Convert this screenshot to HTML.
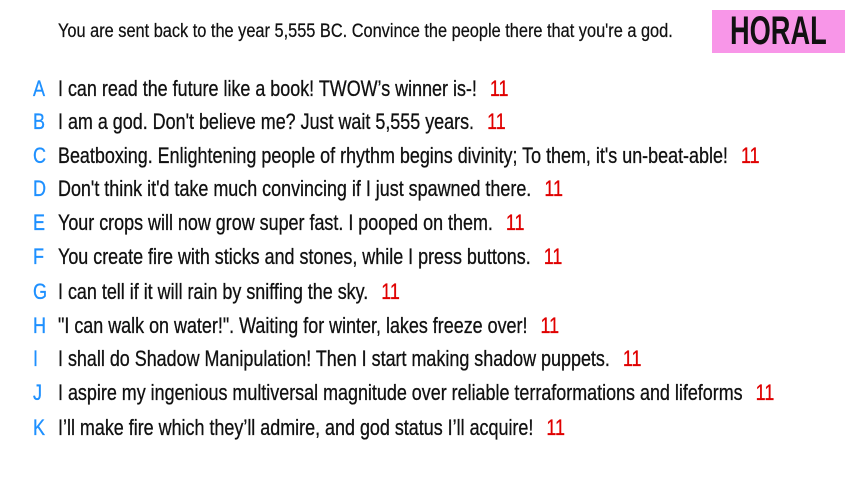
<!DOCTYPE html>
<html><head><meta charset="utf-8"><style>
body{margin:0;width:853px;height:480px;background:#fff;overflow:hidden;font-family:"Liberation Sans",sans-serif;color:#111;position:relative}
.h{position:absolute;left:58px;top:21px;font-size:19px;white-space:nowrap;transform:scaleX(0.86);transform-origin:0 0;-webkit-text-stroke:0.25px #111}
.box{position:absolute;left:712px;top:10px;width:133px;height:43px;background:#f896e8}
.box span{position:absolute;left:18px;top:0;font-size:40px;line-height:43px;font-weight:bold;transform:scaleX(0.68);transform-origin:0 0;white-space:nowrap}
.r{position:absolute;left:0;height:30px;line-height:30px;font-size:22px;white-space:nowrap;-webkit-text-stroke:0.3px currentColor}
.l{position:absolute;left:33px;color:#1e90ff;transform:scaleX(0.82);transform-origin:0 0}
.t{position:absolute;left:58px;transform:scaleX(0.815);transform-origin:0 0}
.n{color:#e00000;margin-left:16px}
</style></head><body>
<div class="h">You are sent back to the year 5,555 BC. Convince the people there that you're a god.</div>
<div class="box"><span>HORAL</span></div>
<div class="r" style="top:74px"><span class="l">A</span><span class="t">I can read the future like a book! TWOW’s winner is-!<span class="n">11</span></span></div>
<div class="r" style="top:107px"><span class="l">B</span><span class="t">I am a god. Don't believe me? Just wait 5,555 years.<span class="n">11</span></span></div>
<div class="r" style="top:141px"><span class="l">C</span><span class="t">Beatboxing. Enlightening people of rhythm begins divinity; To them, it's un-beat-able!<span class="n">11</span></span></div>
<div class="r" style="top:174px"><span class="l">D</span><span class="t">Don't think it'd take much convincing if I just spawned there.<span class="n">11</span></span></div>
<div class="r" style="top:208px"><span class="l">E</span><span class="t">Your crops will now grow super fast. I pooped on them.<span class="n">11</span></span></div>
<div class="r" style="top:242px"><span class="l">F</span><span class="t">You create fire with sticks and stones, while I press buttons.<span class="n">11</span></span></div>
<div class="r" style="top:277px"><span class="l">G</span><span class="t">I can tell if it will rain by sniffing the sky.<span class="n">11</span></span></div>
<div class="r" style="top:311px"><span class="l">H</span><span class="t">"I can walk on water!". Waiting for winter, lakes freeze over!<span class="n">11</span></span></div>
<div class="r" style="top:344px"><span class="l">I</span><span class="t">I shall do Shadow Manipulation! Then I start making shadow puppets.<span class="n">11</span></span></div>
<div class="r" style="top:378px"><span class="l">J</span><span class="t">I aspire my ingenious multiversal magnitude over reliable terraformations and lifeforms<span class="n">11</span></span></div>
<div class="r" style="top:413px"><span class="l">K</span><span class="t">I’ll make fire which they’ll admire, and god status I’ll acquire!<span class="n">11</span></span></div>
</body></html>
